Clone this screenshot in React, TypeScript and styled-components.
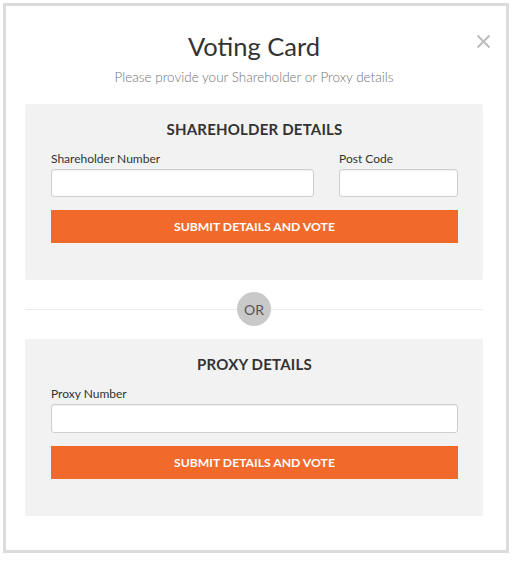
import React from 'react'
import styled, { createGlobalStyle } from 'styled-components'

const GlobalStyle = createGlobalStyle`
  html, body {
    margin: 0;
    padding: 0;
    background: #ffffff;
  }
  body {
    font-family: 'Lato', 'Liberation Sans', sans-serif;
  }
`

interface FieldProps {
  label: string
  width: number
  inputHeight: number
}

const Field: React.FC<FieldProps> = ({ label, width, inputHeight }) => {
  return (
    <StyledField width={width}>
      <StyledLabel>{label}</StyledLabel>
      <StyledInput type="text" inputHeight={inputHeight} />
    </StyledField>
  )
}

const App: React.FC = () => {
  return (
    <>
      <GlobalStyle />
      <StyledCard>
        <StyledClose aria-label="close">
          <svg width="15" height="15" viewBox="0 0 15 15">
            <path d="M1.5 1.5 L13.5 13.5 M13.5 1.5 L1.5 13.5" stroke="#bdbdbd" strokeWidth="2" fill="none" />
          </svg>
        </StyledClose>
        <StyledTitle>Voting Card</StyledTitle>
        <StyledSubtitle>Please provide your Shareholder or Proxy details</StyledSubtitle>

        <StyledPanel height={176}>
          <StyledPanelTitle>SHAREHOLDER DETAILS</StyledPanelTitle>
          <StyledRow>
            <Field label="Shareholder Number" width={263} inputHeight={28} />
            <Field label="Post Code" width={119} inputHeight={28} />
          </StyledRow>
          <StyledButton>SUBMIT DETAILS AND VOTE</StyledButton>
        </StyledPanel>

        <StyledDivider>
          <StyledOr>OR</StyledOr>
        </StyledDivider>

        <StyledPanel height={177}>
          <StyledPanelTitle>PROXY DETAILS</StyledPanelTitle>
          <StyledRow>
            <Field label="Proxy Number" width={407} inputHeight={29} />
          </StyledRow>
          <StyledButton>SUBMIT DETAILS AND VOTE</StyledButton>
        </StyledPanel>
      </StyledCard>
    </>
  )
}

const StyledCard = styled.div`
  position: relative;
  box-sizing: border-box;
  margin: 3px 0 0 3px;
  width: 506px;
  height: 550px;
  border: 3px solid #dcdcdc;
  background: #ffffff;
  padding: 0 23px 0 19px;
  display: flex;
  flex-direction: column;
`

const StyledClose = styled.div`
  position: absolute;
  top: 27px;
  right: 15px;
  width: 15px;
  height: 15px;
  cursor: pointer;
`

const StyledTitle = styled.h1`
  margin: 25px 0 0;
  font-size: 25.5px;
  line-height: 30px;
  font-weight: 400;
  color: #333333;
  text-align: center;
`

const StyledSubtitle = styled.p`
  margin: 8px 0 19px;
  font-size: 13.5px;
  line-height: 16px;
  font-weight: 300;
  color: #737373;
  text-align: center;
`

const StyledPanel = styled.div<{ height: number }>`
  box-sizing: border-box;
  height: ${(props) => props.height}px;
  background: #f2f2f2;
  border-radius: 2px;
  padding: 16px 25px 0 26px;
  display: flex;
  flex-direction: column;
`

const StyledPanelTitle = styled.h2`
  margin: 0;
  font-size: 15px;
  line-height: 18px;
  font-weight: 700;
  color: #333333;
  text-align: center;
  letter-spacing: 0.2px;
`

const StyledRow = styled.div`
  margin-top: 14px;
  display: flex;
  justify-content: space-between;
`

const StyledField = styled.div<{ width: number }>`
  width: ${(props) => props.width}px;
  display: flex;
  flex-direction: column;
`

const StyledLabel = styled.label`
  font-size: 12px;
  line-height: 14px;
  color: #333333;
  margin-bottom: 3px;
`

const StyledInput = styled.input<{ inputHeight: number }>`
  box-sizing: border-box;
  width: 100%;
  height: ${(props) => props.inputHeight}px;
  border: 1px solid #cfcfcf;
  border-radius: 3px;
  background: #ffffff;
  box-shadow: inset 0 1px 1px rgba(0, 0, 0, 0.06);
  outline: none;
`

const StyledButton = styled.button`
  margin-top: 13px;
  height: 33px;
  border: none;
  background: #f26a2b;
  color: #ffffff;
  font-family: 'Lato', 'Liberation Sans', sans-serif;
  font-size: 12.2px;
  font-weight: 700;
  cursor: pointer;
`

const StyledDivider = styled.div`
  position: relative;
  margin: 12px 0 13px;
  height: 34px;
  display: flex;
  align-items: center;
  justify-content: center;
  &::before {
    content: '';
    position: absolute;
    left: 0;
    right: 0;
    top: 17px;
    height: 1px;
    background: #ececec;
  }
`

const StyledOr = styled.div`
  position: relative;
  width: 34px;
  height: 34px;
  border-radius: 50%;
  background: #c9c9c9;
  color: #555555;
  font-size: 14px;
  font-weight: 400;
  display: flex;
  align-items: center;
  justify-content: center;
`

export default App
